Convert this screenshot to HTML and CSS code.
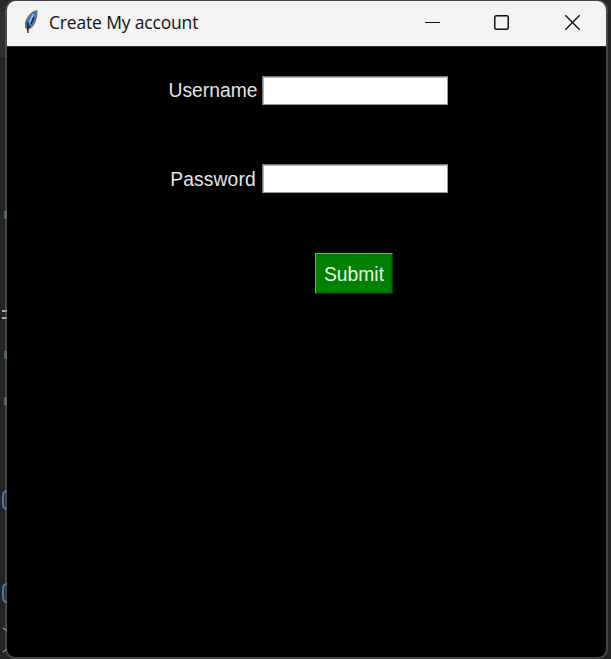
FILE: index.html
```html
<!DOCTYPE html>
<html lang="en">
<head>
<meta charset="utf-8">
<title>Create My account</title>
<link rel="stylesheet" href="styles.css">
</head>
<body>
<svg class="backdrop" width="611" height="659" viewBox="0 0 611 659" fill="none" aria-hidden="true">
  <path d="M0 0H611V12H0z" fill="#292929"/>
  <path d="M0 12H8V57H0z" fill="#2f2f2f"/>
  <path d="M4 211H7V219H4zM4 351H7V359H4zM4 397H7V405H4z" fill="#456b45"/>
  <path d="M2 311H7M2 318H7" stroke="#a5b4c4" stroke-width="2"/>
  <path d="M7 491Q3 491 3 496V504Q3 509 7 509M7 584Q3 584 3 589V597Q3 602 7 602" stroke="#427aab" stroke-width="2"/>
  <path d="M3 628L7 631M3 652L7 649" stroke="#8798a8" stroke-width="1.5"/>
</svg>
<main class="window">
  <header class="titlebar">
    <svg class="feather" width="16" height="26" viewBox="0 0 16 26" aria-hidden="true">
      <path d="M14.3 1C9 1.5 4 7 2 13.5L2 18.5L4.5 21.5L9.5 18C12.5 14 15 8 14.3 1Z" fill="#686d73"/>
      <path d="M12.8 2.5C8 5 4.5 10 3.7 17L8.5 16.5C11.5 13 13 8 12.8 2.5Z" fill="#397bd0"/>
      <path d="M10.5 5L6 14" stroke="#86b9ee" stroke-width="1.8"/>
      <path d="M11 8L8 15M4.8 13L5 24M5 17L7.5 18" stroke="#171b20" stroke-width="1.3" fill="none"/>
    </svg>
    <h1 class="title">Create My account</h1>
    <svg class="controls" width="160" height="20" viewBox="0 0 160 20" fill="none" stroke="#111" aria-hidden="true">
      <path d="M0 9.5H15" stroke-width="1"/>
      <rect x="69.75" y="2.75" width="13.5" height="13.5" rx="1.5" stroke-width="1.5"/>
      <path d="M140.3 2.3L154.7 16.7M154.7 2.3L140.3 16.7" stroke-width="1.4"/>
    </svg>
  </header>
  <form class="form">
    <label class="row"><span class="label">Username</span><input class="entry" type="text"></label>
    <label class="row"><span class="label label-password">Password</span><input class="entry" type="text"></label>
    <button class="submit" type="button">Submit</button>
  </form>
</main>
</body>
</html>
```
FILE: styles.css
```css
* { box-sizing: border-box; }
body {
  margin: 0;
  height: 659px;
  padding-left: 5px;
  overflow: hidden;
  background: #242424;
  font-family: "Liberation Sans", Arial, sans-serif;
}
.backdrop { position: absolute; left: 0; top: 0; }
.window {
  position: relative;
  width: 603px;
  height: 659px;
  border: 2px solid rgba(110, 110, 110, 0.45);
  border-top-width: 1px;
  border-radius: 10px;
  overflow: hidden;
  background: #000;
  background-clip: padding-box;
}
.titlebar {
  display: flex;
  align-items: center;
  height: 46px;
  padding-left: 16px;
  background: #f3f3f3;
  border-bottom: 1px solid #292929;
}
.feather { margin-top: -3px; }
.title {
  width: 376px;
  margin: -3px 0 0 10px;
  font: 400 17.5px/24px "Open Sans", "Noto Sans", sans-serif;
  letter-spacing: -0.17px;
  color: #111;
  white-space: nowrap;
}
.controls { flex: none; margin-top: -1px; }
.form {
  display: flex;
  flex-direction: column;
  align-items: flex-start;
  padding-top: 29px;
  padding-left: 155px;
}
.row {
  display: grid;
  grid-template-columns: 100px 186px;
  align-items: center;
  height: 29px;
  margin-bottom: 60px;
}
.row + .row { margin-top: -1px; }
.label {
  justify-self: center;
  margin-left: 2px;
  font-size: 19.3px;
  line-height: 24px;
  color: #e4e4e4;
}
.label-password {
  padding-top: 2px;
  letter-spacing: 0.12px;
}
.entry {
  width: 186px;
  height: 29px;
  padding: 0 4px;
  border: 1px solid;
  border-color: #777 #999 #999 #777;
  border-radius: 0;
  outline: 0;
  background: #fff;
  box-shadow: inset 1px 1px #b5b5b5;
}
.submit {
  width: 78px;
  height: 41px;
  margin-left: 153px;
  padding: 2px 0 0;
  border: 1px solid;
  border-color: #65b565 #004000 #004000 #65b565;
  border-radius: 0;
  background: #008000;
  box-shadow: inset -1px -1px #006800;
  color: #e8f3e8;
  font: 19.3px/24px "Liberation Sans", Arial, sans-serif;
}
```
